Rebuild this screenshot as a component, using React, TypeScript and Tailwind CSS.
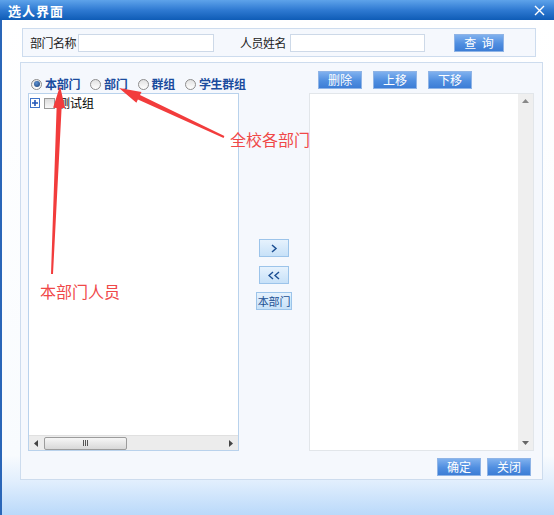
import React from "react";

const font = { fontFamily: '"Noto Sans CJK SC", "Liberation Sans", sans-serif' };

function arrow(tx: number, ty: number, hx: number, hy: number, headLen: number, headW: number, tailW: number, neckW: number) {
  const dx = hx - tx;
  const dy = hy - ty;
  const len = Math.sqrt(dx * dx + dy * dy);
  const ux = dx / len;
  const uy = dy / len;
  const nx = -uy;
  const ny = ux;
  const bx = hx - ux * headLen;
  const by = hy - uy * headLen;
  const p = (x: number, y: number, w: number, s: number) => `${(x + nx * w * s / 2).toFixed(1)},${(y + ny * w * s / 2).toFixed(1)}`;
  return [
    p(tx, ty, tailW, 1),
    p(bx, by, neckW, 1),
    p(bx, by, headW, 1),
    `${hx},${hy}`,
    p(bx, by, headW, -1),
    p(bx, by, neckW, -1),
    p(tx, ty, tailW, -1),
  ].join(" ");
}

function BlueBtn({ children, w = "w-[44px]" }: { children: React.ReactNode; w?: string }) {
  return (
    <div className={`${w} h-[18px] shrink-0 border border-[#8fb4e6] bg-[linear-gradient(to_bottom,#7fb0ee,#4f8ee0_55%,#3c7dd6)] flex items-center justify-center text-[12px] text-white leading-none whitespace-nowrap`}>
      {children}
    </div>
  );
}

function LightBtn({ children, w = "w-[30px]" }: { children: React.ReactNode; w?: string }) {
  return (
    <div className={`${w} h-[18px] shrink-0 border border-[#9cc4ea] bg-[linear-gradient(to_bottom,#e6f2fd,#c7e1f8)] flex items-center justify-center text-[12px] text-[#1c4f93] leading-none whitespace-nowrap overflow-visible`}>
      {children}
    </div>
  );
}

function Radio({ checked, label }: { checked?: boolean; label: string }) {
  return (
    <div className="flex items-center shrink-0">
      <div className="w-[11px] h-[11px] shrink-0 rounded-full border border-[#8d8d8d] bg-[linear-gradient(to_bottom,#e2e2e2,#ffffff)] flex items-center justify-center">
        {checked && <div className="w-[6px] h-[6px] rounded-full bg-[radial-gradient(circle_at_40%_35%,#5b8fd0,#183f75)]" />}
      </div>
      <span className="ml-[3px] text-[12px] font-bold text-[#1b4c9e] leading-none whitespace-nowrap tracking-[-0.3px]">{label}</span>
    </div>
  );
}

export default function App() {
  return (
    <div className="relative w-[554px] h-[515px] overflow-hidden flex flex-col bg-white" style={font}>
      {/* Title */}
      <div className="h-[20px] flex items-center justify-between px-[8px] bg-[linear-gradient(to_bottom,#5ea3ea,#2f7ad2_50%,#0f5cb6)]">
        <span className="text-[13px] font-bold text-white leading-none tracking-[1px]">选人界面</span>
        <svg width="11" height="11" viewBox="0 0 11 11" className="mr-[1px]">
          <path d="M1 1 L10 10 M10 1 L1 10" stroke="#ffffff" strokeWidth="1.4" />
        </svg>
      </div>

      {/* Body */}
      <div className="flex-1 border-l-2 border-[#2a66b8] bg-[linear-gradient(to_bottom,#ffffff_0%,#f8fbfe_88%,#e2effd_93%,#bad9fa_100%)]">
        {/* Search */}
        <div className="mt-[8px] ml-[20px] w-[514px] h-[29px] border border-[#cddcee] bg-[#f5f8fd] flex items-center pl-[7px] text-[12px] text-[#222] whitespace-nowrap">
          <span className="leading-none tracking-[-0.5px]">部门名称</span>
          <div className="ml-[2px] w-[136px] h-[18px] shrink-0 border border-[#cdd9e8] bg-white" />
          <span className="ml-[26px] leading-none tracking-[-0.5px]">人员姓名</span>
          <div className="ml-[4px] w-[135px] h-[18px] shrink-0 border border-[#cdd9e8] bg-white" />
          <div className="ml-[29px]">
            <BlueBtn w="w-[50px]">查&nbsp;&nbsp;询</BlueBtn>
          </div>
        </div>

        {/* Main panel */}
        <div className="mt-[5px] ml-[18px] w-[523px] h-[418px] border border-[#cddcee] bg-[#f5f8fd] pl-[7px]">
          <div className="flex h-[30px]">
            <div className="w-[211px] shrink-0 pt-[12px] pl-[3px] flex gap-[10px]">
              <Radio checked label="本部门" />
              <Radio label="部门" />
              <Radio label="群组" />
              <Radio label="学生群组" />
            </div>
            <div className="w-[70px] shrink-0" />
            <div className="pl-[9px] pt-[8px] flex gap-[11px]">
              <BlueBtn>删除</BlueBtn>
              <BlueBtn>上移</BlueBtn>
              <BlueBtn>下移</BlueBtn>
            </div>
          </div>

          <div className="flex">
            {/* Tree */}
            <div className="w-[211px] h-[358px] shrink-0 border border-[#b9d2ec] bg-white flex flex-col">
              <div className="flex-1 pt-[3px] pl-[1px]">
                <div className="flex items-center h-[12px]">
                  <div className="w-[10px] h-[10px] border border-[#3f73c8] bg-white flex items-center justify-center">
                    <svg width="8" height="8" viewBox="0 0 8 8">
                      <path d="M4 1 V7 M1 4 H7" stroke="#2257b8" strokeWidth="1.6" />
                    </svg>
                  </div>
                  <div className="ml-[4px] w-[11px] h-[11px] border border-[#9a9a9a] bg-[linear-gradient(to_bottom,#dcdcdc,#f8f8f8)]" />
                  <span className="ml-[3px] text-[12px] text-black leading-none whitespace-nowrap">测试组</span>
                </div>
              </div>
              <div className="h-[15px] bg-[#ececec] border-t border-[#e0e0e0] flex items-center">
                <div className="w-[15px] flex justify-center">
                  <svg width="5" height="7" viewBox="0 0 5 7"><path d="M4 0 L0 3.5 L4 7 Z" fill="#444" /></svg>
                </div>
                <div className="w-[83px] h-[13px] rounded-[2px] border border-[#9c9c9c] bg-[linear-gradient(to_bottom,#f6f6f6,#d8d8d8)] flex items-center justify-center gap-[1px]">
                  <div className="w-[1px] h-[6px] bg-[#555]" />
                  <div className="w-[1px] h-[6px] bg-[#555]" />
                  <div className="w-[1px] h-[6px] bg-[#555]" />
                </div>
                <div className="flex-1" />
                <div className="w-[15px] flex justify-center">
                  <svg width="5" height="7" viewBox="0 0 5 7"><path d="M1 0 L5 3.5 L1 7 Z" fill="#444" /></svg>
                </div>
              </div>
            </div>

            {/* Middle */}
            <div className="w-[70px] shrink-0 flex flex-col items-center pt-[146px] gap-[9px]">
              <LightBtn>
                <svg width="8" height="9" viewBox="0 0 8 9"><path d="M2 1 L6 4.5 L2 8" stroke="#1c4f93" strokeWidth="1.5" fill="none" /></svg>
              </LightBtn>
              <LightBtn>
                <svg width="12" height="9" viewBox="0 0 12 9"><path d="M5 1 L1 4.5 L5 8 M11 1 L7 4.5 L11 8" stroke="#1c4f93" strokeWidth="1.4" fill="none" /></svg>
              </LightBtn>
              <div className="-mt-[1px]">
                <LightBtn w="w-[36px]"><span className="text-[11px] tracking-[-0.2px]">本部门</span></LightBtn>
              </div>
            </div>

            {/* Selected list */}
            <div className="w-[225px] h-[358px] shrink-0 border border-[#e2e6ea] bg-white flex justify-end">
              <div className="w-[15px] h-full bg-[#efefef] flex flex-col items-center justify-between py-[5px]">
                <svg width="7" height="4" viewBox="0 0 7 4"><path d="M0 4 L3.5 0 L7 4 Z" fill="#888" /></svg>
                <svg width="7" height="4" viewBox="0 0 7 4"><path d="M0 0 L3.5 4 L7 0 Z" fill="#666" /></svg>
              </div>
            </div>
          </div>

          <div className="flex justify-end gap-[6px] pr-[11px] mt-[7px]">
            <BlueBtn>确定</BlueBtn>
            <BlueBtn>关闭</BlueBtn>
          </div>
        </div>
      </div>

      {/* Annotations */}
      <svg className="absolute inset-0 pointer-events-none" width="554" height="515">
        <polygon points={arrow(52, 274, 60, 86, 22, 12, 2, 5)} fill="#f23c3c" />
        <polygon points={arrow(224, 137, 119, 88, 22, 12, 2, 5)} fill="#f23c3c" />
      </svg>
      <span className="absolute left-[40px] top-[283px] text-[16px] text-[#f04848] leading-none whitespace-nowrap">本部门人员</span>
      <span className="absolute left-[230px] top-[131px] text-[16px] text-[#f04848] leading-none whitespace-nowrap">全校各部门</span>
    </div>
  );
}
